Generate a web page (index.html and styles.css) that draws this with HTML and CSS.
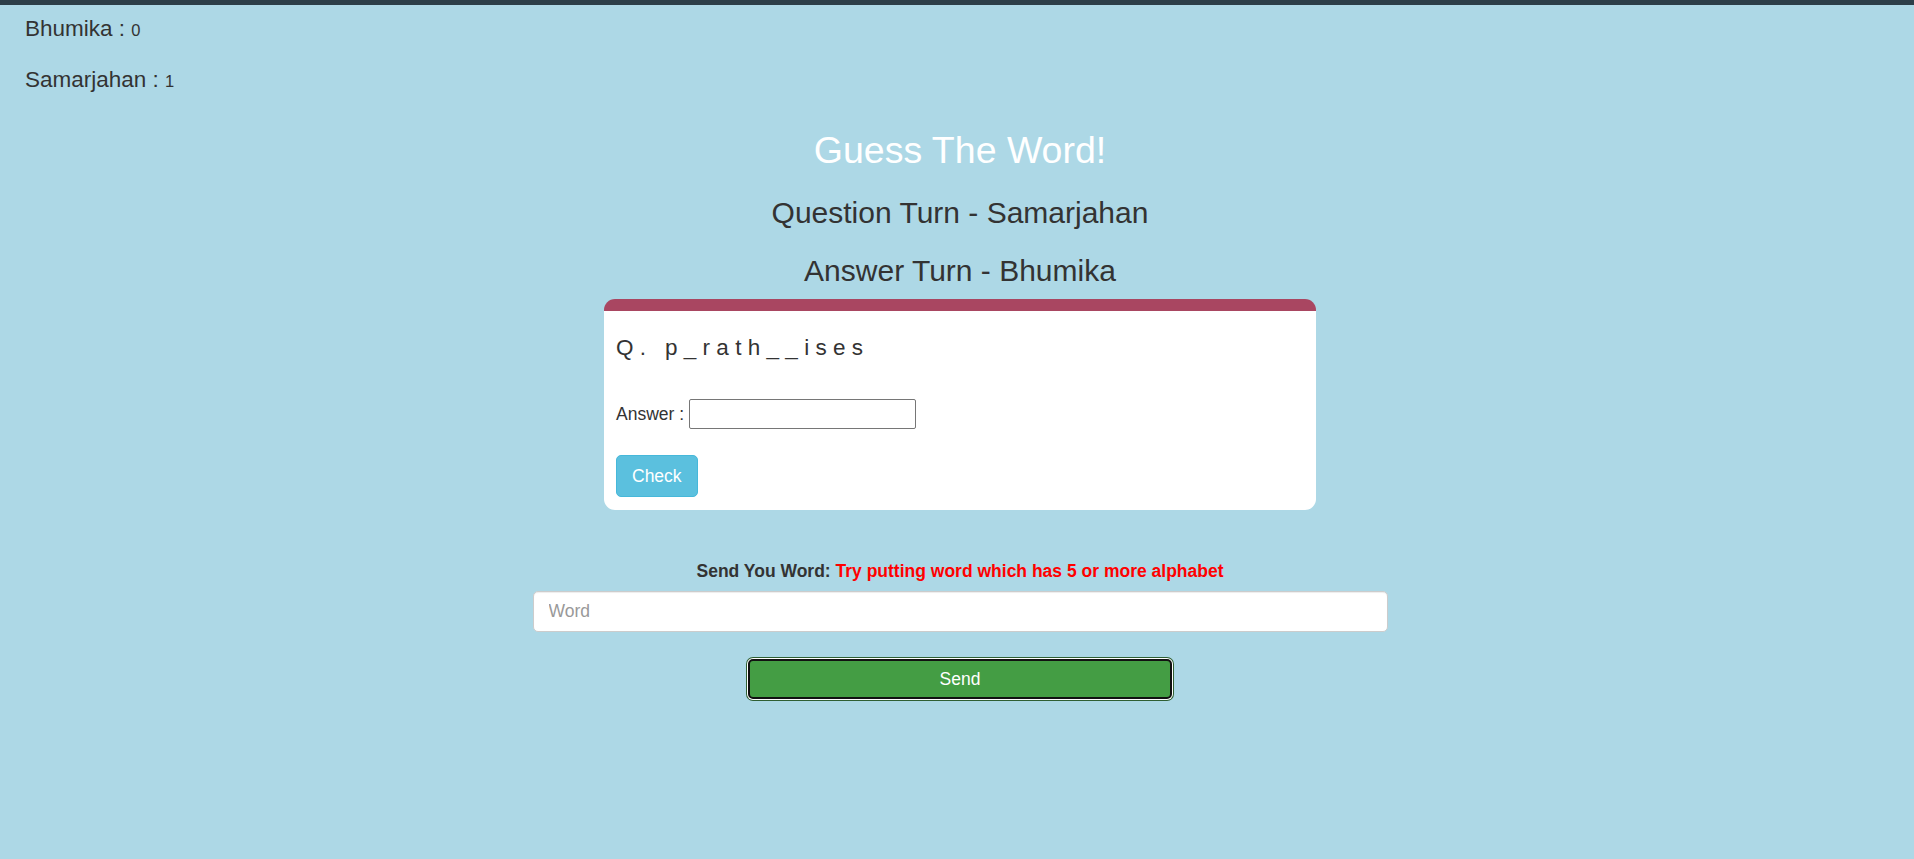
FILE: index.html
```html
<!DOCTYPE html>
<html lang="en">
<head>
<meta charset="utf-8">
<title>Guess The Word!</title>
<link rel="stylesheet" href="styles.css">
</head>
<body>
<div class="topbar"></div>
<div class="scores">
  <div class="score">Bhumika : <span class="pts">0</span></div>
  <div class="score">Samarjahan : <span class="pts">1</span></div>
</div>
<main class="main">
  <h2 class="title">Guess The Word!</h2>
  <h3 class="turn turn-q">Question Turn - Samarjahan</h3>
  <h3 class="turn turn-a">Answer Turn - Bhumika</h3>
  <section class="card">
    <h4 class="question">Q. p_rath__ises</h4>
    <div class="answer-row">
      <label class="answer-label" for="answer">Answer :</label>
      <input class="answer-input" id="answer" type="text">
    </div>
    <button class="btn-check" type="button">Check</button>
  </section>
  <div class="send-label"><b>Send You Word:</b> <b class="hint">Try putting word which has 5 or more alphabet</b></div>
  <input class="word-input" type="text" placeholder="Word">
  <button class="btn-send" type="button">Send</button>
</main>
</body>
</html>
```
FILE: styles.css
```css
html, body {
  margin: 0;
  padding: 0;
}
body {
  background: #add8e6;
  font-family: "Liberation Sans", Arial, Helvetica, sans-serif;
  color: #333;
  font-size: 17.5px;
  line-height: 25px;
  min-height: 859px;
}
.topbar {
  height: 5px;
  background: #2c3e48;
}
.scores {
  padding: 11px 0 0 25px;
  display: flex;
  flex-direction: column;
  gap: 24px;
}
.score {
  font-size: 22.5px;
  line-height: 25px;
}
.pts {
  font-size: 16.5px;
}
.main {
  display: flex;
  flex-direction: column;
  align-items: center;
  padding-left: 6px;
}
.title {
  margin: 36px 0 0;
  font-size: 37.5px;
  line-height: 41px;
  font-weight: 400;
  color: #fff;
}
.turn {
  margin: 25px 0 0;
  font-size: 30px;
  line-height: 33px;
  font-weight: 400;
  color: #333;
}
.card {
  box-sizing: border-box;
  width: 712px;
  margin-top: 12px;
  background: #fff;
  border-top: 12px solid #a94661;
  border-radius: 11px;
  padding: 12px 12px 13px;
  display: flex;
  flex-direction: column;
  align-items: flex-start;
}
.question {
  margin: 12px 0 0;
  font-size: 22.5px;
  line-height: 25px;
  font-weight: 400;
  letter-spacing: 6.3px;
  color: #333;
}
.answer-row {
  margin-top: 39px;
  display: flex;
  align-items: center;
  gap: 5px;
}
.answer-label {
  font-size: 17.5px;
}
.answer-input {
  box-sizing: border-box;
  width: 227px;
  height: 30px;
  border: 1px solid #767676;
  border-radius: 2px;
  padding: 2px 4px;
  font: inherit;
  background: #fff;
}
.btn-check {
  margin-top: 26px;
  box-sizing: border-box;
  height: 42px;
  padding: 7px 15px;
  font-family: inherit;
  font-size: 17.5px;
  line-height: 25px;
  color: #fff;
  background: #5bc0de;
  border: 1px solid #46b8da;
  border-radius: 5px;
}
.send-label {
  margin-top: 49px;
  font-size: 17.5px;
  line-height: 25px;
  color: #333;
  text-align: center;
}
.hint {
  color: #ff0000;
}
.word-input {
  box-sizing: border-box;
  margin-top: 7px;
  width: 855px;
  height: 41px;
  padding: 6px 15px;
  font-family: inherit;
  font-size: 17.5px;
  color: #555;
  background: #fff;
  border: 1px solid #ccc;
  border-radius: 5px;
  box-shadow: inset 0 1px 1px rgba(0, 0, 0, 0.075);
}
.word-input::placeholder {
  color: #999;
}
.btn-send {
  box-sizing: border-box;
  margin-top: 27px;
  width: 424px;
  height: 40px;
  font-family: inherit;
  font-size: 17.5px;
  line-height: 25px;
  color: #fff;
  background: #449d44;
  border: 2px solid #111;
  border-radius: 5px;
  box-shadow: 0 0 0 1px #fff, 0 0 0 2px #2f5f33;
}
```
